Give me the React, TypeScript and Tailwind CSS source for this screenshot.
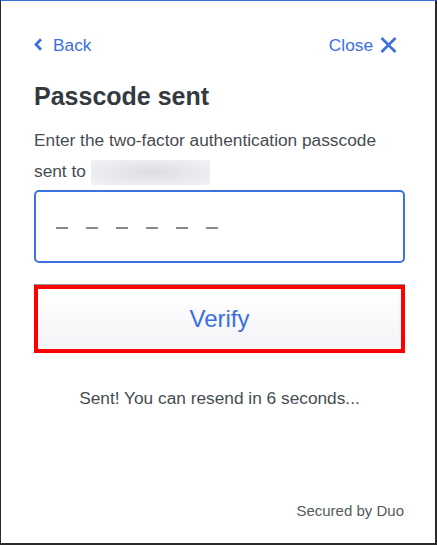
import React from "react";

export default function App() {
  const font = { fontFamily: '"Liberation Sans", Arial, sans-serif' };
  return (
    <div
      style={font}
      className="w-[437px] h-[545px] bg-white border-l border-r-2 border-b-2 border-t border-[#2b2b2b] border-t-[#3b6fd8] flex flex-col pl-[33px] pr-[30px]"
    >
      <div className="flex items-center justify-between pt-[33px] pr-[8px] h-[54px] text-[17.3px] leading-[20px] text-[#3b6fe0]">
        <div className="flex items-center">
          <svg width="9" height="13" viewBox="0 0 9 13" className="mr-[10px]">
            <path d="M7 1.2 L2 6.5 L7 11.8" fill="none" stroke="#3b6fe0" strokeWidth="2.7" />
          </svg>
          <span>Back</span>
        </div>
        <div className="flex items-center">
          <span>Close</span>
          <svg width="17" height="16" viewBox="0 0 17 16" className="ml-[7px]">
            <path d="M1.5 1 L15.5 15 M15.5 1 L1.5 15" fill="none" stroke="#3b6fe0" strokeWidth="2.6" />
          </svg>
        </div>
      </div>

      <h1 className="mt-[26px] text-[25px] leading-[30px] font-bold text-[#343a40]">Passcode sent</h1>

      <p className="mt-[14px] text-[17.3px] leading-[31px] text-[#474c52]">
        Enter the two-factor authentication passcode
        <br />
        sent to{" "}
        <span className="inline-block align-middle w-[119px] h-[25px] bg-[radial-gradient(ellipse_at_center,#dcdde0_0%,#e8eaed_55%,#f1f3f6_100%)]" />
      </p>

      <div className="mt-[3px] h-[73px] border-2 border-[#3a73df] rounded-[5px] flex items-center pl-[20px] gap-[18px]">
        {[0, 1, 2, 3, 4, 5].map((i) => (
          <span key={i} className="block w-[12px] h-[2px] bg-[#8a8a8a] mt-[2px]" />
        ))}
      </div>

      <div className="mt-[22px] h-[68px] border-4 border-[#ff0000] shadow-[0_-1px_0_#8d96a0] bg-[linear-gradient(#ffffff,#f3f4f7)] flex items-center justify-center text-[24px] text-[#3b6fe0]">
        Verify
      </div>

      <div className="mt-[35px] text-center text-[17.3px] leading-[20px] text-[#474c52]">
        Sent! You can resend in 6 seconds...
      </div>

      <div className="mt-auto pb-[23px] pr-[1px] text-right text-[15px] leading-[18px] text-[#555a60]">
        Secured by Duo
      </div>
    </div>
  );
}
